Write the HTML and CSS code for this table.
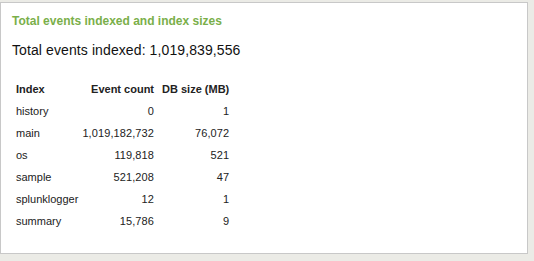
FILE: index.html
```html
<!DOCTYPE html>
<html>
  <head>
    <title>Index sizes</title>
    <link rel="stylesheet" href="styles.css">
  </head>

  <body>
    <div class="panel">
      <h2 class="panel-title">Total events indexed and index sizes</h2>
      <div class="total">Total events indexed: 1,019,839,556</div>
      <table class="index-table">
        <thead>
          <tr>
            <th class="name">Index</th>
            <th class="num">Event count</th>
            <th class="num size">DB size (MB)</th>
          </tr>
        </thead>
        <tbody>
          <tr><td class="name">history</td><td class="num">0</td><td class="num size">1</td></tr>
          <tr><td class="name">main</td><td class="num">1,019,182,732</td><td class="num size">76,072</td></tr>
          <tr><td class="name">os</td><td class="num">119,818</td><td class="num size">521</td></tr>
          <tr><td class="name">sample</td><td class="num">521,208</td><td class="num size">47</td></tr>
          <tr><td class="name">splunklogger</td><td class="num">12</td><td class="num size">1</td></tr>
          <tr><td class="name">summary</td><td class="num">15,786</td><td class="num size">9</td></tr>
        </tbody>
      </table>
    </div>
  </body>
</html>
```

FILE: styles.css
```css
body {
  font-family: "Liberation Sans", Arial, sans-serif;
  background-color: #ebebe6;
  margin: 0;
  padding: 2px 6px 0 0;
}

.panel {
  background: white;
  border: 1px solid #c8c8c8;
  height: 252px;
  box-sizing: border-box;
  padding: 11px 11px;
}

.panel-title {
  margin: 0;
  font-size: 12px;
  font-weight: bold;
  color: #7aaf4a;
}

.total {
  margin-top: 14px;
  font-size: 14px;
  letter-spacing: 0.1px;
  color: #111;
}

.index-table {
  margin: 20px 0 0 2px;
  border-collapse: collapse;
  font-size: 11px;
  color: #222;
}

.index-table th,
.index-table td {
  height: 22px;
  padding: 0 2px;
}

.index-table th {
  font-weight: bold;
}

.name {
  text-align: left;
  width: 60px;
}

.num {
  text-align: right;
}

.index-table .size {
  padding-left: 6px;
}

td.num {
  letter-spacing: 0.1px;
}
```
